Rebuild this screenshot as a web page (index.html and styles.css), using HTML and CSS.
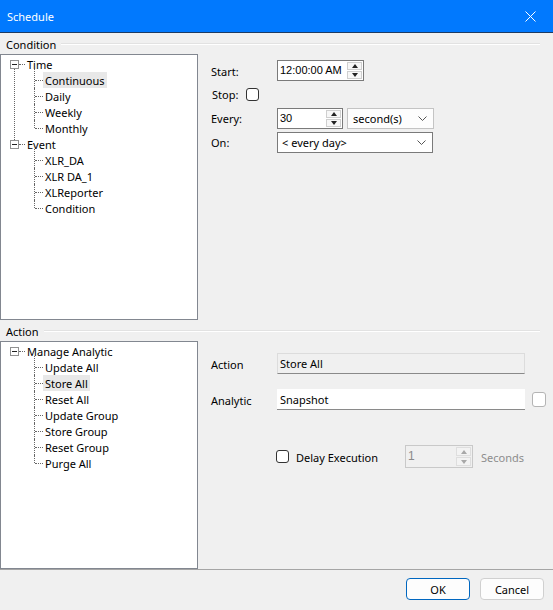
FILE: index.html
```html
<!DOCTYPE html>
<html lang="en">
<head>
<meta charset="utf-8">
<title>Schedule</title>
<link rel="stylesheet" href="styles.css">
</head>
<body>
<div class="window">
  <header class="titlebar">
    <span class="title">Schedule</span>
    <svg class="close" width="11" height="11" viewBox="0 0 11 11"><path d="M0.5 0.5 L10.5 10.5 M10.5 0.5 L0.5 10.5" stroke="#fff" stroke-width="1" fill="none"/></svg>
  </header>

  <section class="group">
    <div class="group-head"><span class="group-title">Condition</span><i class="rule"></i></div>
    <div class="group-body condition-body">
      <div class="tree-box">
        <ul class="tree">
          <li class="node">
            <div class="row"><span class="exp"></span><span class="stub"></span><span class="label">Time</span></div>
            <ul class="children">
              <li><span class="label selected">Continuous</span></li>
              <li><span class="label">Daily</span></li>
              <li><span class="label">Weekly</span></li>
              <li><span class="label">Monthly</span></li>
            </ul>
          </li>
          <li class="node">
            <div class="row"><span class="exp"></span><span class="stub"></span><span class="label">Event</span></div>
            <ul class="children">
              <li><span class="label">XLR_DA</span></li>
              <li><span class="label">XLR DA_1</span></li>
              <li><span class="label">XLReporter</span></li>
              <li><span class="label">Condition</span></li>
            </ul>
          </li>
        </ul>
      </div>

      <div class="time-form">
        <span class="field-label">Start:</span>
        <div class="spin spin-time">
          <span class="val">12:00:00 AM</span>
          <span class="arrows"><i class="up"></i><i class="down"></i></span>
        </div>

        <div class="stop-row">
          <span class="field-label">Stop:</span>
          <span class="check"></span>
        </div>

        <span class="field-label">Every:</span>
        <div class="every-row">
          <div class="spin spin-every">
            <span class="val">30</span>
            <span class="arrows"><i class="up"></i><i class="down"></i></span>
          </div>
          <div class="select select-unit">
            <span class="select-text">second(s)</span>
            <svg class="chev" width="9" height="5" viewBox="0 0 9 5"><path d="M0.5 0.5 L4.5 4.5 L8.5 0.5" stroke="#555" fill="none"/></svg>
          </div>
        </div>

        <span class="field-label">On:</span>
        <div class="select select-day">
          <span class="select-text">&lt; every day&gt;</span>
          <svg class="chev" width="9" height="5" viewBox="0 0 9 5"><path d="M0.5 0.5 L4.5 4.5 L8.5 0.5" stroke="#555" fill="none"/></svg>
        </div>
      </div>
    </div>
  </section>

  <section class="group">
    <div class="group-head"><span class="group-title">Action</span><i class="rule"></i></div>
    <div class="group-body action-body">
      <div class="tree-box">
        <ul class="tree">
          <li class="node">
            <div class="row"><span class="exp"></span><span class="stub"></span><span class="label">Manage Analytic</span></div>
            <ul class="children">
              <li><span class="label">Update All</span></li>
              <li><span class="label selected">Store All</span></li>
              <li><span class="label">Reset All</span></li>
              <li><span class="label">Update Group</span></li>
              <li><span class="label">Store Group</span></li>
              <li><span class="label">Reset Group</span></li>
              <li><span class="label">Purge All</span></li>
            </ul>
          </li>
        </ul>
      </div>

      <div class="action-form">
        <div class="action-row">
          <span class="field-label">Action</span>
          <div class="textbox readonly">Store All</div>
        </div>
        <div class="action-row analytic-row">
          <span class="field-label">Analytic</span>
          <div class="textbox">Snapshot</div>
          <span class="square"></span>
        </div>
        <div class="delay-row">
          <span class="check"></span>
          <span class="delay-text">Delay Execution</span>
          <div class="spin spin-delay disabled">
            <span class="val">1</span>
            <span class="arrows"><i class="up"></i><i class="down"></i></span>
          </div>
          <span class="unit">Seconds</span>
        </div>
      </div>
    </div>
  </section>

  <footer class="buttons">
    <button class="btn btn-default">OK</button>
    <button class="btn">Cancel</button>
  </footer>
</div>
</body>
</html>
```

FILE: styles.css
```css
html, body {
  margin: 0;
  padding: 0;
  background: #f0f0f0;
}

.window {
  width: 553px;
  height: 610px;
  display: flex;
  flex-direction: column;
  font-family: "Noto Sans", sans-serif;
  font-size: 11px;
  color: #000;
  background: #f0f0f0;
  overflow: hidden;
}

/* ---------- title bar ---------- */
.titlebar {
  height: 32px;
  flex: none;
  background: #0179fe;
  border-bottom: 1px solid #1c3b63;
  display: flex;
  align-items: center;
  justify-content: space-between;
  padding: 0 17px 0 7px;
}

.title {
  color: #fff;
  font-size: 11px;
  padding-top: 1px;
}

.close {
  display: block;
}

/* ---------- group boxes ---------- */
.group {
  display: flex;
  flex-direction: column;
  flex: none;
}

.group-head {
  height: 21px;
  display: flex;
  align-items: center;
  padding: 1px 13px 0 6px;
  box-sizing: border-box;
}

.rule {
  flex: 1;
  height: 0;
  margin-left: 5px;
  border-top: 1px solid #e2e2e2;
  border-bottom: 1px solid #fff;
}

.group-body {
  display: flex;
}

.condition-body { height: 266px; }
.action-body { height: 228px; }

/* ---------- tree views ---------- */
.tree-box {
  width: 198px;
  flex: none;
  box-sizing: border-box;
  border: 1px solid #828790;
  background: #fff;
}

.tree {
  list-style: none;
  margin: 0;
  padding: 1px 0 0 9px;
}

.tree ul {
  list-style: none;
  margin: 0;
}

.node {
  position: relative;
}

/* connector between sibling root nodes */
.node:not(:last-child)::before {
  content: "";
  position: absolute;
  left: 4px;
  top: 13px;
  bottom: -4px;
  border-left: 1px dotted #666;
}

.row {
  height: 16px;
  display: flex;
  align-items: center;
}

.exp {
  width: 9px;
  height: 9px;
  box-sizing: border-box;
  border: 1px solid #919191;
  background: #fff;
  position: relative;
  flex: none;
}

.exp::after {
  content: "";
  position: absolute;
  left: 1px;
  top: 3px;
  width: 5px;
  height: 1px;
  background: #222;
}

.stub {
  width: 6px;
  height: 0;
  border-top: 1px dotted #666;
  flex: none;
}

.label {
  display: inline-block;
  height: 16px;
  line-height: 17px;
  padding: 0 2px;
  white-space: nowrap;
}

.label.selected {
  background: #e8e8e8;
}

.children {
  padding: 0 0 0 24px;
}

.children li {
  position: relative;
  height: 16px;
  padding-left: 9px;
}

.children li::before {
  content: "";
  position: absolute;
  left: 0;
  top: 0;
  bottom: 0;
  border-left: 1px dotted #666;
}

.children li:first-child::before { top: -3px; }
.children li:last-child::before { bottom: 8px; }

.children li::after {
  content: "";
  position: absolute;
  left: 1px;
  top: 8px;
  width: 8px;
  border-top: 1px dotted #666;
}

/* ---------- shared controls ---------- */
.field-label {
  white-space: nowrap;
  padding-top: 1px;
}

.check {
  width: 13px;
  height: 13px;
  box-sizing: border-box;
  border: 1px solid #333;
  border-radius: 3px;
  background: #fff;
  flex: none;
}

.spin {
  height: 21px;
  box-sizing: border-box;
  border: 1px solid #7a7a7a;
  background: #fff;
  display: flex;
  align-items: stretch;
}

.spin .val {
  flex: 1;
  min-width: 0;
  padding-left: 2px;
  line-height: 18px;
  font-family: "Liberation Sans", Arial, sans-serif;
  font-size: 11px;
  white-space: nowrap;
  overflow: hidden;
}

.arrows {
  width: 15px;
  flex: none;
  margin: 1px 1px 1px 0;
  display: flex;
  flex-direction: column;
  gap: 1px;
}

.arrows i {
  flex: 1;
  box-sizing: border-box;
  border: 1px solid #cfcfcf;
  background: #f7f7f7;
  position: relative;
}

.arrows i::after {
  content: "";
  position: absolute;
  left: 50%;
  top: 50%;
  margin: -2px 0 0 -3px;
  border-left: 3px solid transparent;
  border-right: 3px solid transparent;
}

.arrows .up::after { border-bottom: 4px solid #222; }
.arrows .down::after { border-top: 4px solid #222; }

.select {
  height: 21px;
  box-sizing: border-box;
  border: 1px solid #7a7a7a;
  background: #fff;
  display: flex;
  align-items: center;
  justify-content: space-between;
  padding: 1px 6px 0 4px;
}

.chev { display: block; }

/* ---------- time settings ---------- */
.time-form {
  padding: 5px 0 0 13px;
  display: grid;
  grid-template-columns: 66px auto;
  grid-template-rows: 23px 24px 24px 24px;
  align-items: center;
  align-content: start;
  justify-items: start;
}

.spin-time { width: 87px; }

.stop-row {
  grid-column: 1 / 3;
  display: flex;
  align-items: center;
  gap: 8px;
  padding-left: 1px;
}

.every-row {
  display: flex;
  gap: 4px;
}

.spin-every { width: 66px; }

.select-unit {
  width: 87px;
  border-color: #c4c4c4;
  background: #fdfdfd;
  padding-left: 5px;
}

.select-day { width: 156px; }

/* ---------- action settings ---------- */
.action-form {
  padding: 12px 0 0 13px;
  display: flex;
  flex-direction: column;
}

.action-row {
  display: flex;
  align-items: center;
  height: 21px;
}

.action-row .field-label {
  width: 66px;
  flex: none;
}

.analytic-row {
  margin-top: 15px;
}

.textbox {
  width: 248px;
  height: 21px;
  box-sizing: border-box;
  padding: 1px 0 0 3px;
  line-height: 19px;
  background: #fff;
  border-bottom: 1px solid #8a8a8a;
}

.textbox.readonly {
  background: #f0f0f0;
  border: 1px solid #dcdcdc;
  border-bottom-color: #8a8a8a;
  padding-left: 2px;
  line-height: 18px;
}

.square {
  width: 14px;
  height: 15px;
  box-sizing: border-box;
  margin-left: 7px;
  border: 1px solid #b4b4b4;
  border-radius: 3px;
  background: #fff;
}

.delay-row {
  margin-top: 35px;
  padding-left: 65px;
  display: flex;
  align-items: center;
  height: 23px;
}

.delay-text {
  width: 109px;
  margin-left: 7px;
  padding-top: 1px;
}

.spin-delay {
  width: 68px;
  height: 23px;
}

.spin.disabled {
  border-color: #c9c9c9;
  background: #f0f0f0;
}

.spin.disabled .val {
  color: #8a8a8a;
  line-height: 21px;
  font-size: 12px;
}

.spin.disabled .arrows i {
  border-color: #dedede;
  background: #f3f3f3;
}

.spin.disabled .arrows .up::after { border-bottom-color: #a8a8a8; }
.spin.disabled .arrows .down::after { border-top-color: #a8a8a8; }

.unit {
  margin-left: 8px;
  padding-top: 1px;
  color: #8d8d8d;
}

/* ---------- dialog buttons ---------- */
.buttons {
  flex: 1;
  border-top: 1px solid #a5a5a5;
  display: flex;
  justify-content: flex-end;
  align-items: flex-start;
  gap: 10px;
  padding: 8px 9px 0 0;
}

.btn {
  width: 64px;
  height: 22px;
  padding: 1px 0 0;
  font-family: inherit;
  font-size: 11px;
  color: #000;
  background: #fdfdfd;
  border: 1px solid #d0d0d0;
  border-radius: 4px;
}

.btn-default {
  border-color: #0067c0;
}
```
